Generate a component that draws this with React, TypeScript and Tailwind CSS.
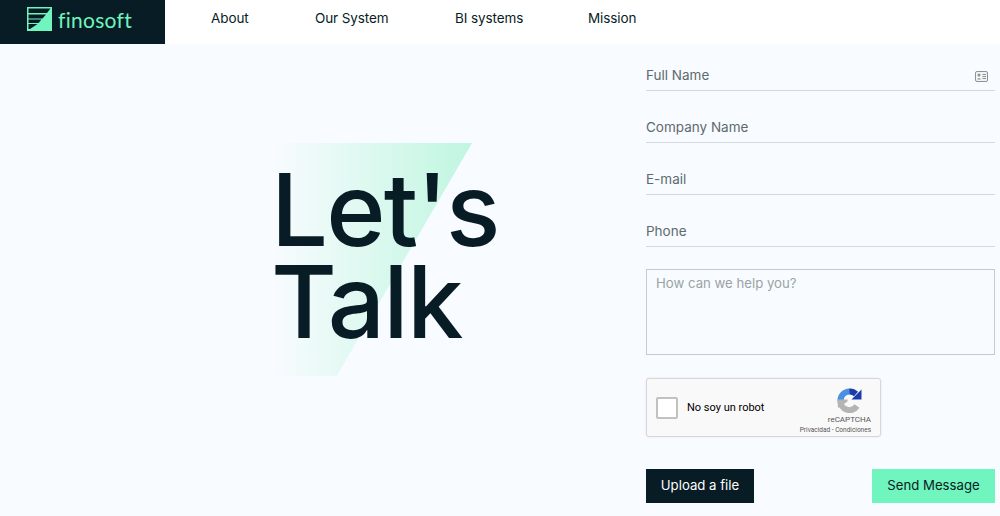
import { useState } from 'react'

const navLinks = [
  { label: 'About', className: 'w-[104px]' },
  { label: 'Our System', className: 'w-[140px]' },
  { label: 'BI systems', className: 'w-[133px]' },
  { label: 'Mission', className: '' },
]

const fields = ['Full Name', 'Company Name', 'E-mail', 'Phone']

function Logo() {
  return (
    <svg width="25" height="24" viewBox="0 0 25 24" fill="none">
      <rect width="25" height="24" fill="#6ff5bd" />
      <path d="M1.5 1.5 H23.5 L20 6 H1.5 Z" fill="#071c24" />
      <path d="M1.5 7.5 H19 L15.5 11.5 H1.5 Z" fill="#071c24" />
      <path d="M1.5 12.5 H14.5 L11.5 16 H1.5 Z" fill="#071c24" />
      <path d="M1.5 17 H10.5 L3 22 H1.5 Z" fill="#071c24" />
    </svg>
  )
}

function RecaptchaLogo() {
  return (
    <svg width="25" height="25" viewBox="0 0 25 25" fill="none">
      <path d="M3.5 13 A9 9 0 0 1 13 3.5" stroke="#4a90e2" strokeWidth="6" />
      <path d="M12.5 3.5 A9 9 0 0 1 19 6" stroke="#1c3aa9" strokeWidth="6" />
      <path d="M14.5 11.5 L24.5 11.5 L24.5 1.5 Z" fill="#1c3aa9" />
      <path d="M20 18 A9 9 0 0 1 3.5 12.5" stroke="#b4b4b4" strokeWidth="6" />
      <path d="M0.5 11.5 L10.5 11.5 L10.5 13.5 L1 20 Z" fill="#b4b4b4" />
    </svg>
  )
}

export default function App() {
  const [message, setMessage] = useState('')

  return (
    <div className="h-[516px] overflow-hidden bg-[#f8fbff] font-['Inter',sans-serif] text-[#071c24]">
      {/* Header */}
      <header className="flex h-[44px] bg-white">
        <div className="flex w-[165px] items-center gap-[6px] bg-[#071c24] pl-[27px] pb-[6px]">
          <Logo />
          <span className="text-[21px] leading-none tracking-[0.3px] text-[#6ff5bd] font-['Lato',sans-serif]">finosoft</span>
        </div>
        <nav className="flex items-center pl-[46px] pb-[8px] text-[13.5px] tracking-[-0.1px]">
          {navLinks.map((link) => (
            <a key={link.label} href="#" className={link.className}>
              {link.label}
            </a>
          ))}
        </nav>
      </header>

      <main className="flex">
        {/* Hero */}
        <section className="w-[646px] pl-[271px] pt-[99px]">
          <div className="relative h-[233px] w-[240px]">
            <div className="absolute left-[2px] top-0 h-[233px] w-[199px] bg-gradient-to-r from-[#f8fbff] to-[#bff6e0] [clip-path:polygon(0_0,100%_0,32%_100%,0_100%)]" />
            <h1 className="relative pt-[20px] text-[101px] font-medium leading-[92px] tracking-[-1.8px]">
              Let's
              <br />
              Talk
            </h1>
          </div>
        </section>

        {/* Contact form */}
        <form className="flex w-[349px] flex-col">
          {fields.map((field, i) => (
            <div key={field} className="flex h-[52px] items-end justify-between border-b border-[#d3dadb] pb-[5px] first:h-[47px]">
              <span className="text-[13.5px] text-[#5d6a6e]">{field}</span>
              {i === 0 && (
                <svg width="13" height="11" viewBox="0 0 13 11" className="mb-[3px] mr-[7px]">
                  <rect x="0.5" y="0.5" width="12" height="10" rx="1.5" fill="#f2f4f4" stroke="#8b9496" />
                  <circle cx="4" cy="4" r="1.5" fill="#8b9496" />
                  <path d="M2 8.5 Q4 5.5 6 8.5 Z" fill="#8b9496" />
                  <path d="M7.5 3.5 H11 M7.5 5.5 H11 M7.5 7.5 H11" stroke="#8b9496" />
                </svg>
              )}
            </div>
          ))}
          <textarea
            value={message}
            onChange={(e) => setMessage(e.target.value)}
            placeholder="How can we help you?"
            className="mt-[22px] h-[86px] resize-none border border-[#c6cccd] bg-transparent px-[9px] py-[4px] text-[13.2px] placeholder:text-[#9aa3a5]"
          />

          {/* reCAPTCHA */}
          <div className="mt-[23px] flex h-[59px] w-[235px] items-center rounded-[3px] border border-[#d6d6d6] bg-[#f9f9f9] pl-[9px] pr-[9px] shadow-[0_0_3px_rgba(0,0,0,0.08)] font-['Roboto',sans-serif]">
            <div className="h-[22px] w-[22px] rounded-[2px] border-2 border-[#c1c1c1] bg-white" />
            <span className="ml-[9px] mt-[1px] flex-1 text-[11px] text-black">No soy un robot</span>
            <div className="flex flex-col items-end pt-[7px]">
              <div className="mr-[9px]">
                <RecaptchaLogo />
              </div>
              <span className="mt-[1px] text-[8px] leading-[12px] text-[#555]">reCAPTCHA</span>
              <span className="text-[6.5px] leading-[8px] text-[#555]">Privacidad - Condiciones</span>
            </div>
          </div>

          <div className="mt-[32px] flex justify-between">
            <button type="button" className="h-[34px] w-[108px] bg-[#071c24] pb-[1px] text-[13.2px] text-white">
              Upload a file
            </button>
            <button type="submit" className="h-[34px] w-[123px] bg-[#6ff5bd] pb-[1px] text-[13.2px] text-[#071c24]">
              Send Message
            </button>
          </div>
        </form>
      </main>
    </div>
  )
}
